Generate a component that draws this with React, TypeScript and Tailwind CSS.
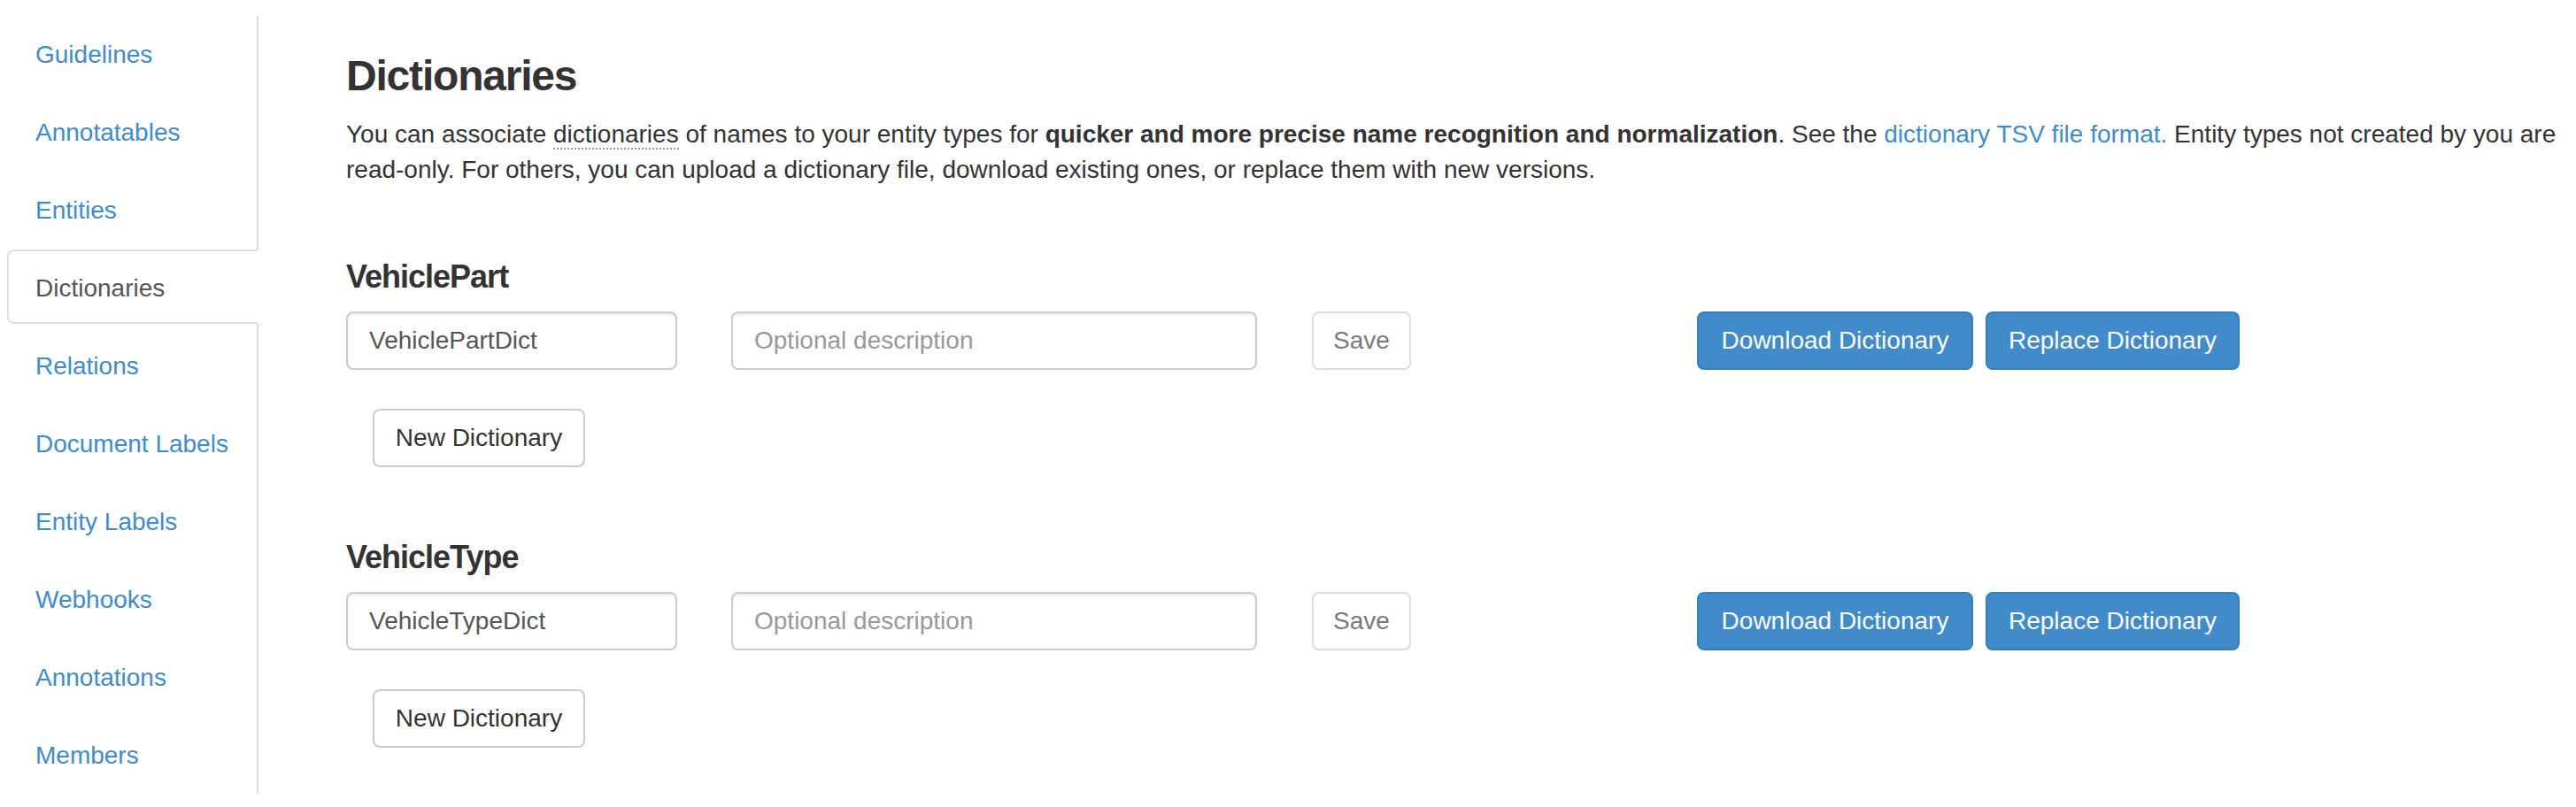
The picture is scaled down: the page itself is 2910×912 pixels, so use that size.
import { useState } from "react";

type Section = {
    name: string;
    dict: string;
}

const navItems = [
    "Guidelines",
    "Annotatables",
    "Entities",
    "Dictionaries",
    "Relations",
    "Document Labels",
    "Entity Labels",
    "Webhooks",
    "Annotations",
    "Members",
];

const sections: Section[] = [
    { name: "VehiclePart", dict: "VehiclePartDict" },
    { name: "VehicleType", dict: "VehicleTypeDict" },
];

function SideNav({ active }: { active: string }) {
    return (
        <nav className="mt-[18px] w-[292px] shrink-0 self-start border-r-2 border-[#ddd] pl-[8px] pb-[3px] flex flex-col gap-[4px]">
            {navItems.map((item) =>
                item == active ? (
                    <a key={item} className="relative -mr-[2px] block h-[84px] rounded-l-[8px] border-2 border-[#ddd] border-r-transparent bg-white px-[30px] pt-[22px] pb-[18px] text-[#555]">
                        {item}
                    </a>
                ) : (
                    <a key={item} href="#" className="block h-[84px] border-2 border-transparent px-[30px] pt-[22px] pb-[18px] text-[#428bca]">
                        {item}
                    </a>
                )
            )}
        </nav>
    );
}

function DictionarySection({ name, dict, first }: Section & { first: boolean }) {
    const [desc, setDesc] = useState("");

    return (
        <div>
            <h4 className={`${first ? "mt-[81px]" : "mt-[82px]"} text-[36px] leading-[40px] font-bold tracking-[-1px] text-[#333]`}>{name}</h4>
            <div className="mt-[19px] flex items-center">
                <input
                    defaultValue={dict}
                    className="h-[66px] w-[374px] rounded-[8px] border-2 border-[#ccc] px-[24px] text-[#555] shadow-[inset_0_2px_2px_rgba(0,0,0,0.075)] outline-none"
                />
                <input
                    value={desc}
                    onChange={(e) => setDesc(e.target.value)}
                    placeholder="Optional description"
                    className="ml-[61px] h-[66px] w-[594px] rounded-[8px] border-2 border-[#ccc] px-[24px] text-[#555] placeholder:text-[#999] shadow-[inset_0_2px_2px_rgba(0,0,0,0.075)] outline-none"
                />
                <button disabled className="ml-[62px] flex h-[66px] w-[112px] items-center justify-center rounded-[8px] border-2 border-[#ccc] bg-white text-[#333] opacity-65">
                    Save
                </button>
                <button className="ml-[323px] flex h-[66px] w-[312px] items-center justify-center rounded-[8px] border-2 border-[#357ebd] bg-[#428bca] text-white">
                    Download Dictionary
                </button>
                <button className="ml-[14px] flex h-[66px] w-[287px] items-center justify-center rounded-[8px] border-2 border-[#357ebd] bg-[#428bca] text-white">
                    Replace Dictionary
                </button>
            </div>
            <button className="ml-[30px] mt-[44px] flex h-[66px] w-[240px] items-center justify-center rounded-[8px] border-2 border-[#ccc] bg-white text-[#333]">
                New Dictionary
            </button>
        </div>
    );
}

export default function App() {
    return (
        <div className="flex h-[912px] w-[2910px] overflow-hidden bg-white font-['Liberation_Sans',Arial,sans-serif] text-[28px] leading-[40px] text-[#333]">
            <SideNav active="Dictionaries" />
            <main className="ml-[99px] min-w-0 flex-1 pt-[60px]">
                <h3 className="text-[48px] leading-[52px] font-bold tracking-[-1.2px]">Dictionaries</h3>
                <p className="mt-[20px] whitespace-nowrap">
                    You can associate{" "}
                    <span className="border-b-2 border-dotted border-[#999]">dictionaries</span> of names to your entity
                    types for <b>quicker and more precise name recognition and normalization</b>. See the{" "}
                    <a href="#" className="text-[#428bca]">dictionary TSV file format.</a> Entity types not created by you are
                    <br />
                    read-only. For others, you can upload a dictionary file, download existing ones, or replace them with new
                    versions.
                </p>
                {sections.map((s, i) => (
                    <DictionarySection key={s.name} name={s.name} dict={s.dict} first={i == 0} />
                ))}
            </main>
        </div>
    );
}
